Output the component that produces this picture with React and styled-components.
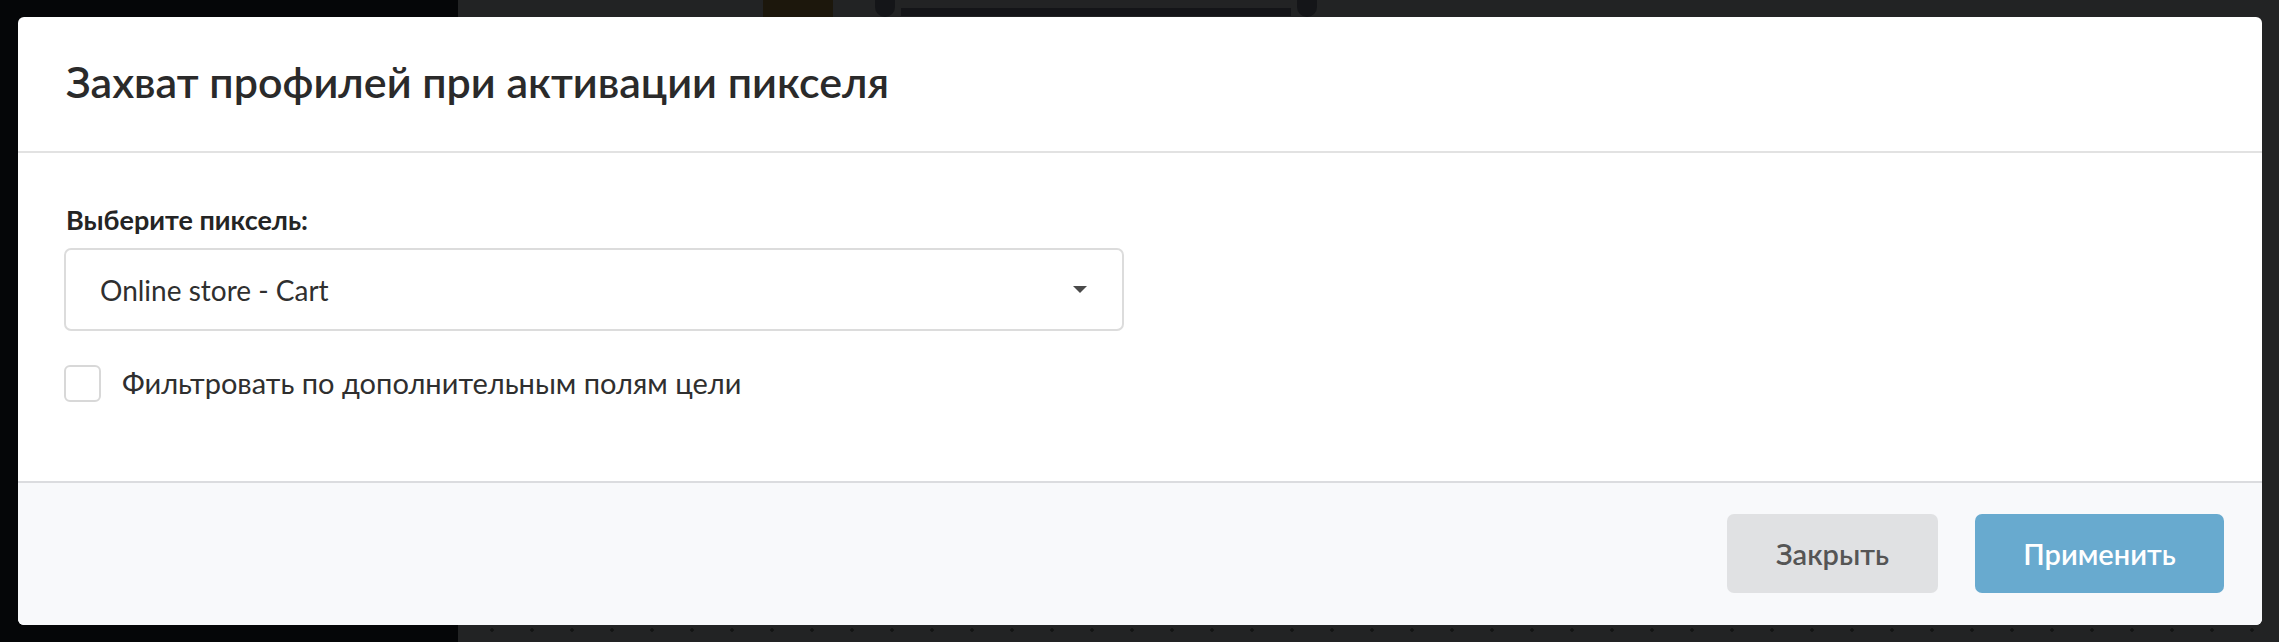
import React, { useState } from 'react'
import styled, { createGlobalStyle } from 'styled-components'

const GlobalStyle = createGlobalStyle`
  * { box-sizing: border-box; }
  html, body { margin: 0; height: 100%; }
  body {
    font-family: 'Lato', 'Noto Sans', sans-serif;
    background: #050608;
    overflow: hidden;
  }
`

const App = () => {
  const [filter, setFilter] = useState(false)

  return (
    <Page>
      <GlobalStyle />
      <Sidebar />
      <Main>
        <TopStrip>
          <Blob />
          <Knob />
          <Track />
          <Knob />
        </TopStrip>
      </Main>

      <Modal>
        <Header>
          <Title>Захват профилей при активации пикселя</Title>
        </Header>

        <Body>
          <Label>Выберите пиксель:</Label>
          <Select>
            <span>Online store - Cart</span>
            <Caret />
          </Select>

          <CheckRow onClick={() => setFilter(!filter)}>
            <Box $checked={filter} />
            <CheckText>Фильтровать по дополнительным полям цели</CheckText>
          </CheckRow>
        </Body>

        <Footer>
          <Button>Закрыть</Button>
          <Button $primary>Применить</Button>
        </Footer>
      </Modal>
    </Page>
  )
}

export default App

const Page = styled.div`
  display: flex;
  width: 100vw;
  height: 100vh;
  position: relative;
`

const Sidebar = styled.div`
  width: 458px;
  background: #050608;
`

const Main = styled.div`
  flex: 1;
  background-color: #222324;
  background-image: radial-gradient(circle, #131414 1.5px, transparent 2px);
  background-size: 40px 40px;
  background-repeat: repeat-x;
  background-position: 14px 610px;
`

const TopStrip = styled.div`
  display: flex;
  align-items: flex-start;
  gap: 6px;
  padding-left: 305px;
  height: 17px;
`

const Blob = styled.div`
  width: 70px;
  height: 17px;
  background: #1c170c;
  margin-right: 36px;
`

const Knob = styled.div`
  width: 20px;
  height: 17px;
  border-radius: 0 0 10px 10px;
  background: #141518;
`

const Track = styled.div`
  width: 390px;
  height: 8px;
  margin-top: 8px;
  background: #141518;
`

const Modal = styled.div`
  position: absolute;
  left: 18px;
  top: 17px;
  width: 2244px;
  height: 608px;
  background: #fff;
  border-radius: 6px;
  overflow: hidden;
  display: flex;
  flex-direction: column;
`

const Header = styled.div`
  height: 136px;
  display: flex;
  align-items: center;
  padding: 0 48px 4px;
  border-bottom: 2px solid #e2e2e2;
`

const Title = styled.h1`
  margin: 0;
  font-size: 43px;
  font-weight: 600;
  line-height: 1.2;
  color: #2a2a2a;
`

const Body = styled.div`
  flex: 1;
  padding: 51px 46px 0;
  display: flex;
  flex-direction: column;
  align-items: flex-start;
`

const Label = styled.div`
  font-size: 27px;
  font-weight: 700;
  line-height: 1.2;
  color: #242424;
  margin-left: 2px;
  margin-bottom: 12px;
`

const Select = styled.div`
  width: 1060px;
  height: 83px;
  border: 2px solid #dcdcdc;
  border-radius: 7px;
  display: flex;
  align-items: center;
  justify-content: space-between;
  padding: 0 35px 0 34px;
  font-size: 28px;
  color: #2f2f2f;
  cursor: pointer;
`

const Caret = styled.span`
  width: 0;
  height: 0;
  border-left: 7px solid transparent;
  border-right: 7px solid transparent;
  border-top: 7px solid #4a4a4a;
`

const CheckRow = styled.label`
  display: flex;
  align-items: center;
  gap: 21px;
  margin-top: 34px;
  cursor: pointer;
`

const Box = styled.span`
  width: 37px;
  height: 37px;
  border: 2px solid #d8d8d8;
  border-radius: 6px;
  background: ${p => (p.$checked ? '#68aacf' : '#fff')};
`

const CheckText = styled.span`
  font-size: 29px;
  line-height: 1.2;
  color: #2f2f2f;
`

const Footer = styled.div`
  height: 144px;
  border-top: 2px solid #dbdcdf;
  background: #f8f9fb;
  display: flex;
  align-items: center;
  justify-content: flex-end;
  gap: 37px;
  padding: 0 38px 2px;
`

const Button = styled.button`
  height: 79px;
  padding: 0 46px;
  border: none;
  border-radius: 7px;
  font-family: 'Lato', 'Noto Sans', sans-serif;
  font-size: 29px;
  font-weight: 600;
  color: ${p => (p.$primary ? '#fff' : '#555')};
  background: ${p => (p.$primary ? '#68aacf' : '#e0e1e3')};
  min-width: ${p => (p.$primary ? '249px' : '211px')};
  cursor: pointer;
`
